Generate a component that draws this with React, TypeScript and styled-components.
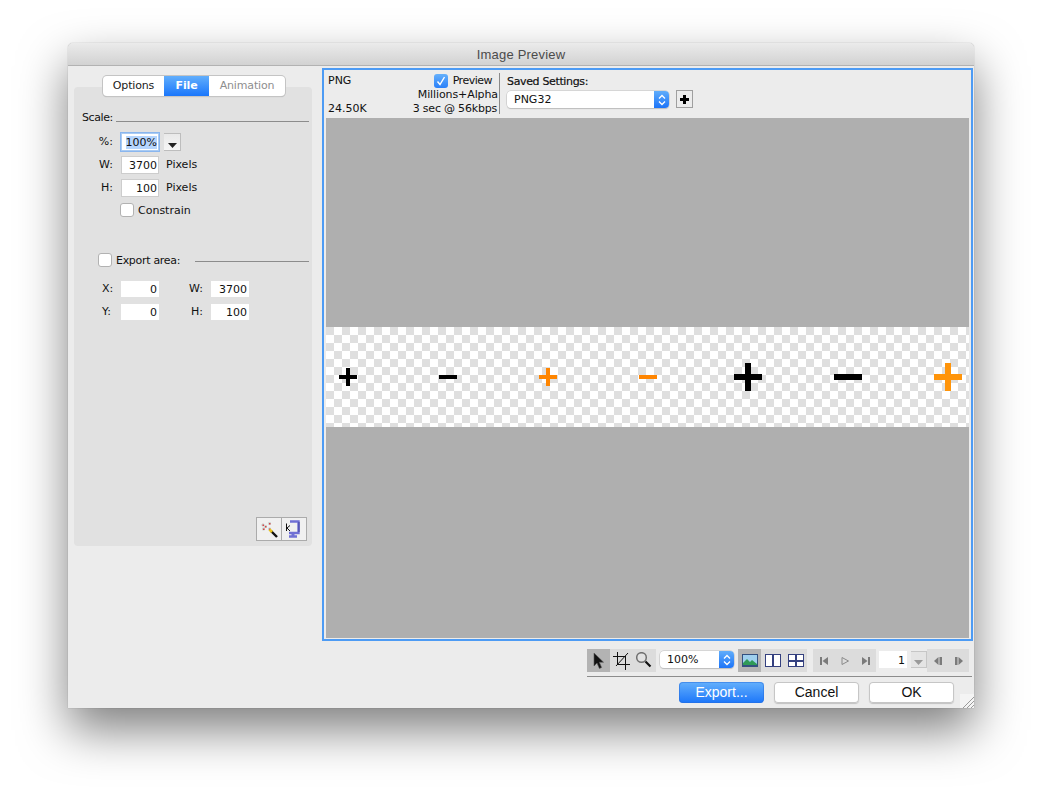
import React from 'react';
import styled, { createGlobalStyle, css } from 'styled-components';

const GlobalStyle = createGlobalStyle`
  html, body {
    margin: 0;
    background: #fff;
  }

  body {
    font-family: "DejaVu Sans", "Liberation Sans", sans-serif;
    font-size: 11px;
    color: #111;
  }
`;

const uiFont = '"Liberation Sans", Arial, sans-serif';

const Page = styled.div`
  box-sizing: border-box;
  width: 1042px;
  height: 800px;
  padding: 43px 68px 0;
  overflow: hidden;
`;

const Win = styled.div`
  position: relative;
  width: 906px;
  height: 665px;
  background: #ececec;
  border-radius: 5px 5px 0 0;
  box-shadow: 0 22px 48px rgba(0, 0, 0, 0.5), 0 0 1px rgba(0, 0, 0, 0.45);
  display: flex;
  flex-direction: column;
`;

const TitleBar = styled.div`
  box-sizing: border-box;
  height: 23px;
  flex: none;
  border-radius: 5px 5px 0 0;
  border-bottom: 1px solid #b2b2b2;
  background: linear-gradient(#ebebeb, #d2d2d2);
  font: 13px/23px ${uiFont};
  letter-spacing: 0.2px;
  color: #4b4b4b;
  text-align: center;
`;

const Body = styled.div`
  flex: 1;
  display: flex;
  min-height: 0;
`;

const LeftColumn = styled.div`
  box-sizing: border-box;
  width: 254px;
  flex: none;
  padding: 10px 10px 0 6px;
  display: flex;
  flex-direction: column;
`;

const Tabs = styled.div`
  align-self: center;
  position: relative;
  z-index: 1;
  display: flex;
  height: 20px;
  margin: 0 0 -9px 2px;
  background: #fff;
  border-radius: 4px;
  box-shadow: 0 0 0 1px #c4c4c4, 0 1px 1px rgba(0, 0, 0, 0.22);
  overflow: hidden;
`;

const Tab = styled.div<{ $active?: boolean; $disabled?: boolean; $w: number }>`
  width: ${p => p.$w}px;
  text-align: center;
  line-height: 20px;
  letter-spacing: -0.15px;
  color: ${p => (p.$disabled ? '#8e8e8e' : '#1a1a1a')};
  ${p => p.$active && css`
    color: #fff;
    font-weight: bold;
    background: linear-gradient(#61aefc, #1a76fb);
  `}
`;

const Panel = styled.div`
  box-sizing: border-box;
  width: 238px;
  height: 459px;
  padding: 23px 3px 5px 8px;
  background: #e1e1e1;
  border-radius: 4px;
  display: flex;
  flex-direction: column;
`;

const Heading = styled.div<{ $gap: number }>`
  display: flex;
  align-items: flex-end;
  height: 15px;
  gap: ${p => p.$gap}px;
  line-height: 15px;
  letter-spacing: -0.4px;
`;

const Rule = styled.div`
  flex: 1;
  height: 1px;
  margin-bottom: 3px;
  background: #8c8c8c;
`;

const FieldRow = styled.div<{ $top: number }>`
  display: flex;
  align-items: center;
  margin-top: ${p => p.$top}px;
  height: 18px;
`;

const FieldLabel = styled.div`
  width: 31px;
  margin-right: 8px;
  text-align: right;
  flex: none;
  margin-top: -1px;
`;

const Field = styled.div<{ $plain?: boolean; $focus?: boolean }>`
  box-sizing: border-box;
  width: 38px;
  height: ${p => (p.$plain ? 16 : 18)}px;
  flex: none;
  background: #fff;
  text-align: right;
  padding-right: 2px;
  line-height: ${p => (p.$plain ? 18 : 20)}px;
  ${p => !p.$plain && css`
    box-shadow: inset 0 0 0 1px #cdcdcd;
  `}
  ${p => p.$focus && css`
    box-shadow: 0 0 0 1px #8ab6ee, inset 0 0 0 1px #a9cbf3;
  `}
`;

const Selected = styled.span`
  background: #b5d5fd;
`;

const MiniDrop = styled.div`
  box-sizing: border-box;
  width: 17px;
  height: 18px;
  margin-left: 5px;
  border: 1px solid #bdbdbd;
  border-width: 1px 1px 1px 0;
  background: linear-gradient(#e9e9e9, #f6f6f6);
  display: flex;
  align-items: flex-end;
  justify-content: center;
  padding-bottom: 2px;
`;

const Unit = styled.div`
  margin: -2px 0 0 7px;
`;

const CheckBox = styled.div`
  box-sizing: border-box;
  width: 14px;
  height: 14px;
  flex: none;
  background: #fff;
  border: 1px solid #b2b2b2;
  border-radius: 3px;
`;

const CheckRow = styled.div<{ $top: number; $left: number; $gap: number }>`
  display: flex;
  align-items: center;
  gap: ${p => p.$gap}px;
  margin: ${p => p.$top}px 0 0 ${p => p.$left}px;
  height: 14px;
`;

const ExportLabel = styled.span`
  letter-spacing: -0.3px;
  margin-right: 11px;
`;

const ExportRule = styled(Rule)`
  margin: 2px 0 0 0;
`;

const AreaGrid = styled.div`
  display: grid;
  grid-template-columns: 39px 38px 52px 38px;
  grid-auto-rows: 16px;
  row-gap: 7px;
  margin-top: 14px;
`;

const AreaLabel = styled.div<{ $w?: boolean }>`
  text-align: ${p => (p.$w ? 'right' : 'left')};
  padding: ${p => (p.$w ? '0 8px 0 0' : '0 0 0 20px')};
  line-height: 15px;
`;

const PanelTools = styled.div`
  margin: auto 2px 0 auto;
  display: flex;
  border: 1px solid #ababab;
  background: #f0f0f0;
`;

const PanelTool = styled.div`
  box-sizing: border-box;
  width: 25px;
  height: 22px;
  display: flex;
  align-items: center;
  justify-content: center;
  &:first-child {
    width: 24px;
  }
  & + & {
    border-left: 1px solid #ababab;
  }
`;

const RightColumn = styled.div`
  flex: 1;
  min-width: 0;
  padding: 2px 1px 0 0;
  display: flex;
  flex-direction: column;
`;

const Frame = styled.div`
  box-sizing: border-box;
  height: 573px;
  flex: none;
  border: 2px solid #4d9bf4;
  padding: 0 2px 1px;
  display: flex;
  flex-direction: column;
`;

const Header = styled.div`
  height: 48px;
  flex: none;
  display: flex;
  line-height: 14px;
`;

const Info = styled.div`
  box-sizing: border-box;
  width: 174px;
  height: 41px;
  margin: 3px 7px 0 0;
  padding: 1px 1px 0 2px;
  border-right: 1px solid #8a8a8a;
  display: grid;
  grid-template-columns: 1fr auto;
  grid-template-rows: 14px 14px 14px;
  white-space: nowrap;
`;

const PreviewCheck = styled.div`
  display: flex;
  align-items: center;
  gap: 5px;
  padding-right: 6px;
  margin-top: -1px;
  justify-self: end;
  letter-spacing: -0.5px;
`;

const BlueCheck = styled.div`
  width: 14px;
  height: 14px;
  border-radius: 3px;
  background: linear-gradient(#65b0fb, #2a80f9);
  display: flex;
  align-items: center;
  justify-content: center;
`;

const Alpha = styled.div`
  grid-column: 1 / 3;
  text-align: right;
  letter-spacing: -0.1px;
`;

const Rate = styled.div`
  text-align: right;
  padding-right: 1px;
  letter-spacing: -0.2px;
`;

const Settings = styled.div`
  padding-top: 5px;
`;

const SettingsLabel = styled.div`
  height: 16px;
  letter-spacing: -0.35px;
  -webkit-text-stroke: 0.2px #111;
`;

const SettingsRow = styled.div`
  display: flex;
  align-items: flex-start;
  gap: 7px;
`;

const Combo = styled.div<{ $w: number; $left?: number }>`
  box-sizing: border-box;
  width: ${p => p.$w}px;
  height: 17px;
  flex: none;
  margin-left: ${p => p.$left || 0}px;
  margin-bottom: 2px;
  display: flex;
  background: #fff;
  border-radius: 4px;
  box-shadow: 0 0 0 0.5px #c0c0c0, 0 1px 1px rgba(0, 0, 0, 0.2);
  overflow: hidden;
  line-height: 17px;
`;

const ComboText = styled.div`
  flex: 1;
  padding-left: 7px;
`;

const ComboStepper = styled.div`
  width: 15px;
  background: linear-gradient(#60adfb, #1c74f8);
  display: flex;
  align-items: center;
  justify-content: center;
`;

const PlusButton = styled.div`
  box-sizing: border-box;
  width: 17px;
  height: 18px;
  margin-top: -1px;
  border: 1px solid #9f9f9f;
  background: #ececec;
  display: flex;
  align-items: center;
  justify-content: center;
`;

const Matte = styled.div<{ $h: number }>`
  height: ${p => p.$h}px;
  flex: none;
  background: #afafaf;
`;

const Strip = styled.div`
  height: 100px;
  flex: none;
  overflow: hidden;
  display: flex;
  background: conic-gradient(#fff 25%, #dfdfdf 0 50%, #fff 0 75%, #dfdfdf 0) 0 0 / 16px 16px;
`;

const StripCell = styled.div`
  width: 100px;
  flex: none;
  display: flex;
  align-items: center;
  justify-content: center;
  &:first-child {
    margin-left: -28px;
  }
`;

const Bottom = styled.div`
  padding: 8px 1px 0 265px;
`;

const Toolbar = styled.div`
  display: flex;
  align-items: center;
  height: 23px;
  margin-bottom: 4px;
`;

const ToolGroup = styled.div<{ $left?: number }>`
  display: flex;
  background: #dcdcdc;
  margin-left: ${p => p.$left || 0}px;
`;

const Tool = styled.div<{ $on?: boolean; $w?: number }>`
  width: ${p => p.$w || 23}px;
  height: 23px;
  display: flex;
  align-items: center;
  justify-content: center;
  background: ${p => (p.$on ? '#b3b3b3' : 'transparent')};
`;

const FrameInput = styled.div`
  box-sizing: border-box;
  width: 28px;
  height: 17px;
  margin: 0 0 2px 3px;
  background: #fff;
  text-align: right;
  padding-right: 2px;
  line-height: 19px;
`;

const FrameStep = styled.div`
  box-sizing: border-box;
  width: 16px;
  height: 17px;
  margin: 0 0 2px 4px;
  border: 1px solid #c6c6c6;
  border-width: 1px 1px 1px 0;
  background: #e4e4e4;
  display: flex;
  align-items: flex-end;
  justify-content: center;
  padding-bottom: 2px;
`;

const Divider = styled.div`
  height: 1px;
  background: #8c8c8c;
`;

const Actions = styled.div`
  display: flex;
  justify-content: flex-end;
  gap: 10px;
  padding: 5px 18px 0 0;
`;

const Button = styled.div<{ $primary?: boolean }>`
  width: 85px;
  height: 21px;
  border-radius: 4px;
  text-align: center;
  font: 14px/21px ${uiFont};
  ${p => (p.$primary
    ? css`
      color: #fff;
      background: linear-gradient(#64b0fc, #1c76f9);
      box-shadow: inset 0 0 0 1px rgba(40, 110, 220, 0.5);
    `
    : css`
      color: #111;
      background: #fff;
      box-shadow: inset 0 0 0 1px #c6c6c6, 0 1px 1px rgba(0, 0, 0, 0.18);
    `)}
`;

const Grip = styled.div`
  position: absolute;
  right: 0;
  bottom: 0;
  width: 14px;
  height: 14px;
  background: #f4f4f4;
  display: flex;
`;

const DownTriangle = ({ color = '#222' }: { color?: string }) => (
  <svg width="9" height="5" viewBox="0 0 9 5"><path d="M0 0h9L4.5 5z" fill={color} /></svg>
);

const Stepper = () => (
  <svg width="8" height="12" viewBox="0 0 8 12" fill="none" stroke="#fff" strokeWidth="1.3">
    <path d="M1 4.5 4 1.5l3 3M1 7.5l3 3 3-3" />
  </svg>
);

const Mark = ({ size, bar, color, minus }: { size: number; bar: number; color: string; minus?: boolean }) => {
  const start = (size - bar) / 2;
  return (
    <svg width={size} height={size} viewBox={`0 0 ${size} ${size}`} fill={color} shapeRendering="crispEdges">
      <rect x="0" y={start} width={size} height={bar} />
      {!minus && <rect x={start} y="0" width={bar} height={size} />}
    </svg>
  );
};

const ArrowIcon = () => (
  <svg width="14" height="18" viewBox="0 0 14 18">
    <path d="M2 1v13l3-3 2.400 5.500 2.200-1L7.300 10.200H11.500z" fill="#111" stroke="#555" strokeWidth=".6" />
  </svg>
);

const CropIcon = () => (
  <svg width="18" height="18" viewBox="0 0 18 18" fill="none" stroke="#111" shapeRendering="crispEdges">
    <path d="M0 4.500h13M4.500 0v13M4.500 12.500H17M12.500 4.500V18" strokeWidth="1.600" />
    <path d="M3 14 15 1" strokeWidth="1" shapeRendering="auto" />
  </svg>
);

const ZoomIcon = () => (
  <svg width="17" height="17" viewBox="0 0 17 17" fill="none">
    <circle cx="5.500" cy="5.500" r="4.800" fill="#e2e2e2" stroke="#6f6f6f" strokeWidth="1.500" />
    <path d="m9.500 9.500 5 5" stroke="#111" strokeWidth="2.200" />
  </svg>
);

const LandscapeIcon = () => (
  <svg width="16" height="13" viewBox="0 0 16 13" shapeRendering="crispEdges">
    <rect width="16" height="13" fill="#34507f" />
    <rect x="1" y="1" width="14" height="10" fill="#9fd0ee" />
    <path d="M1 11V9l4-4 3 3 2-2 5 4v1z" fill="#2f9a57" shapeRendering="auto" />
  </svg>
);

const PaneIcon = ({ quad }: { quad?: boolean }) => (
  <svg width="16" height="13" viewBox="0 0 16 13" shapeRendering="crispEdges">
    <rect width="16" height="13" fill="#34407f" />
    <rect x="1" y="1" width="14" height="11" fill="#fff" />
    <rect x="7" y="1" width="2" height="11" fill="#34407f" />
    {quad && <rect x="1" y="5.500" width="14" height="2" fill="#34407f" />}
  </svg>
);

const VcrIcon = ({ d, hollow }: { d: string; hollow?: boolean }) => (
  <svg width="10" height="10" viewBox="0 0 10 10">
    <path d={d} fill={hollow ? 'none' : '#7b7b7b'} stroke={hollow ? '#8a8a8a' : 'none'} />
  </svg>
);

const WandIcon = () => (
  <svg width="20" height="18" viewBox="0 0 20 18">
    <path d="M3 5h2M4 4v2M9.500 3.500h2M10.500 2.500v2M5.500 6.500h2M6.500 5.500v2M3.500 9h2M4.500 8v2M9.500 9h2M10.500 8v2" stroke="#9fb5ad" strokeWidth="3" opacity=".45" />
    <g fill="#d8444a">
      <rect x="3.500" y="4.500" width="1.500" height="1.500" />
      <rect x="10" y="3" width="1.500" height="1.500" />
      <rect x="6" y="6" width="1.500" height="1.500" />
      <rect x="4" y="8.500" width="1.500" height="1.500" />
      <rect x="10" y="8.500" width="1.500" height="1.500" />
    </g>
    <path d="m12 11 6 6" stroke="#111" strokeWidth="2.400" />
    <path d="m10.500 9.500 2.500 2.500" stroke="#e8c21c" strokeWidth="2.600" />
  </svg>
);

const ClampIcon = () => (
  <svg width="20" height="20" viewBox="0 0 20 20" fill="none">
    <path d="M6 2.500h8.500v11.500H5M5 17.500h8" stroke="#6f6fd4" strokeWidth="2.400" />
    <path d="M9 14v3" stroke="#6f6fd4" strokeWidth="3" />
    <path d="M15 3v10" stroke="#3f3f9c" strokeWidth="1" />
    <path d="M2.500 4.500v7.500M6 6.500 3 9l3 3" stroke="#111" strokeWidth="1" />
  </svg>
);

const marks = [
  { size: 18, bar: 4, color: '#000' },
  { size: 18, bar: 4, color: '#000', minus: true },
  { size: 18, bar: 4, color: '#ff8500' },
  { size: 18, bar: 4, color: '#ff8500', minus: true },
  { size: 28, bar: 6, color: '#000' },
  { size: 28, bar: 6, color: '#000', minus: true },
  { size: 28, bar: 6, color: '#ff940a' }
];

const App = () => (
  <Page>
    <GlobalStyle />
    <Win>
      <TitleBar>Image Preview</TitleBar>
      <Body>
        <LeftColumn>
          <Tabs>
            <Tab $w={61}>Options</Tab>
            <Tab $active $w={45}>File</Tab>
            <Tab $disabled $w={76}>Animation</Tab>
          </Tabs>
          <Panel>
            <Heading $gap={3}>Scale:<Rule /></Heading>
            <FieldRow $top={8}>
              <FieldLabel>%:</FieldLabel>
              <Field $focus><Selected>100%</Selected></Field>
              <MiniDrop><DownTriangle /></MiniDrop>
            </FieldRow>
            <FieldRow $top={5}>
              <FieldLabel>W:</FieldLabel>
              <Field>3700</Field>
              <Unit>Pixels</Unit>
            </FieldRow>
            <FieldRow $top={5}>
              <FieldLabel>H:</FieldLabel>
              <Field>100</Field>
              <Unit>Pixels</Unit>
            </FieldRow>
            <CheckRow $top={6} $left={38} $gap={4}><CheckBox />Constrain</CheckRow>
            <CheckRow $top={36} $left={16} $gap={4}>
              <CheckBox />
              <ExportLabel>Export area:</ExportLabel>
              <ExportRule />
            </CheckRow>
            <AreaGrid>
              <AreaLabel>X:</AreaLabel>
              <Field $plain>0</Field>
              <AreaLabel $w>W:</AreaLabel>
              <Field $plain>3700</Field>
              <AreaLabel>Y:</AreaLabel>
              <Field $plain>0</Field>
              <AreaLabel $w>H:</AreaLabel>
              <Field $plain>100</Field>
            </AreaGrid>
            <PanelTools>
              <PanelTool><WandIcon /></PanelTool>
              <PanelTool><ClampIcon /></PanelTool>
            </PanelTools>
          </Panel>
        </LeftColumn>
        <RightColumn>
          <Frame>
            <Header>
              <Info>
                <div>PNG</div>
                <PreviewCheck>
                  <BlueCheck>
                    <svg width="10" height="10" viewBox="0 0 10 10" fill="none" stroke="#fff" strokeWidth="1.400">
                      <path d="m1.500 5.500 2.500 3 4.500-7.500" />
                    </svg>
                  </BlueCheck>
                  Preview
                </PreviewCheck>
                <Alpha>Millions+Alpha</Alpha>
                <div>24.50K</div>
                <Rate>3 sec @ 56kbps</Rate>
              </Info>
              <Settings>
                <SettingsLabel>Saved Settings:</SettingsLabel>
                <SettingsRow>
                  <Combo $w={162}>
                    <ComboText>PNG32</ComboText>
                    <ComboStepper><Stepper /></ComboStepper>
                  </Combo>
                  <PlusButton><Mark size={9} bar={3} color="#000" /></PlusButton>
                </SettingsRow>
              </Settings>
            </Header>
            <Matte $h={209} />
            <Strip>
              {marks.map((m, i) => (
                <StripCell key={i}><Mark {...m} /></StripCell>
              ))}
            </Strip>
            <Matte $h={211} />
          </Frame>
          <Bottom>
            <Toolbar>
              <ToolGroup>
                <Tool $on><ArrowIcon /></Tool>
                <Tool><CropIcon /></Tool>
                <Tool><ZoomIcon /></Tool>
              </ToolGroup>
              <Combo $w={74} $left={4}>
                <ComboText>100%</ComboText>
                <ComboStepper><Stepper /></ComboStepper>
              </Combo>
              <ToolGroup $left={4}>
                <Tool $on><LandscapeIcon /></Tool>
                <Tool><PaneIcon /></Tool>
                <Tool><PaneIcon quad /></Tool>
              </ToolGroup>
              <ToolGroup $left={6}>
                <Tool $w={21}><VcrIcon d="M1 1h2v8H1zM9 1v8L3.500 5z" /></Tool>
                <Tool $w={21}><VcrIcon hollow d="M2 1.500v7L8.500 5z" /></Tool>
                <Tool $w={21}><VcrIcon d="M9 1H7v8h2zM1 1v8l5.500-4z" /></Tool>
              </ToolGroup>
              <FrameInput>1</FrameInput>
              <FrameStep><DownTriangle color="#9a9a9a" /></FrameStep>
              <ToolGroup>
                <Tool $w={21}><VcrIcon d="M5.500 1v8L1 5zM6.500 1H9v8H6.500z" /></Tool>
                <Tool $w={21}><VcrIcon d="M1 1h2.500v8H1zM4.500 1v8L9 5z" /></Tool>
              </ToolGroup>
            </Toolbar>
            <Divider />
            <Actions>
              <Button $primary>Export...</Button>
              <Button>Cancel</Button>
              <Button>OK</Button>
            </Actions>
          </Bottom>
        </RightColumn>
      </Body>
      <Grip>
        <svg width="14" height="14" viewBox="0 0 14 14" stroke="#9a9a9a" fill="none">
          <path d="M3 14 14 3M7 14l7-7M11 14l3-3" />
        </svg>
      </Grip>
    </Win>
  </Page>
);

export default App;
